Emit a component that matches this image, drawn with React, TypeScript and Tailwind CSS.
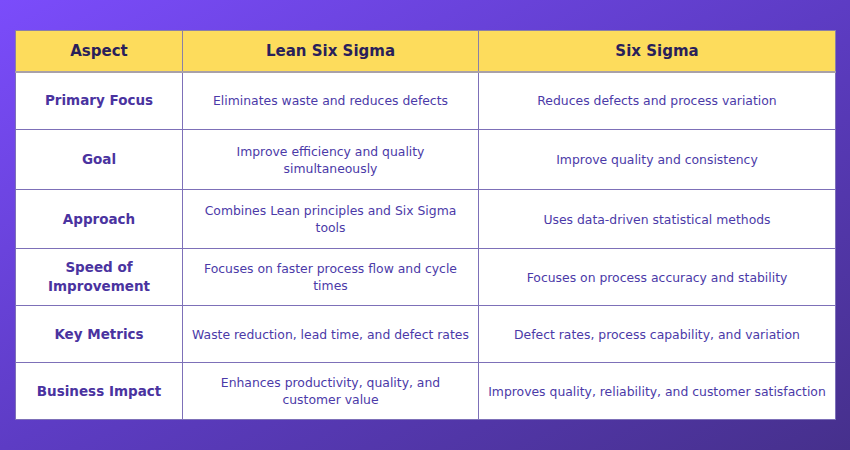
import React from "react";

type Cell = string | string[];

const rows: [string, Cell, Cell][] = [
  ["Primary Focus", "Eliminates waste and reduces defects", "Reduces defects and process variation"],
  ["Goal", ["Improve efficiency and quality", "simultaneously"], "Improve quality and consistency"],
  ["Approach", ["Combines Lean principles and Six Sigma", "tools"], "Uses data-driven statistical methods"],
  ["Speed of Improvement", ["Focuses on faster process flow and cycle", "times"], "Focuses on process accuracy and stability"],
  ["Key Metrics", "Waste reduction, lead time, and defect rates", "Defect rates, process capability, and variation"],
  ["Business Impact", ["Enhances productivity, quality, and", "customer value"], "Improves quality, reliability, and customer satisfaction"],
];

const heights = ["h-[58px]", "h-[60px]", "h-[59px]", "h-[57px]", "h-[57px]", "h-[57px]"];

function Text({ c }: { c: Cell }) {
  if (typeof c === "string") return <>{c}</>;
  return (
    <>
      {c.map((l, i) => (
        <span key={i} className="block">
          {l}
        </span>
      ))}
    </>
  );
}

export default function App() {
  return (
    <div
      className="w-[850px] h-[450px] bg-gradient-to-br from-[#7b4cfb] via-[#5d3cc4] to-[#46308c] pt-[30px] pl-[15px]"
      style={{ fontFamily: '"DejaVu Sans", sans-serif' }}
    >
      <table className="border-collapse w-[820px] table-fixed bg-white">
        <colgroup>
          <col className="w-[167px]" />
          <col className="w-[296px]" />
          <col className="w-[357px]" />
        </colgroup>
        <thead>
          <tr className="h-[41px] bg-[#fddc5c]">
            {["Aspect", "Lean Six Sigma", "Six Sigma"].map((h) => (
              <th
                key={h}
                className="border border-[#8b7fa6] border-b-[2px] border-b-[#a9a1a8] text-[15px] font-bold text-[#2a1f5a] text-center p-0"
              >
                {h}
              </th>
            ))}
          </tr>
        </thead>
        <tbody>
          {rows.map((r, i) => (
            <tr key={r[0]} className={heights[i]}>
              <td className="border border-[#7d70b8] text-center px-3 text-[13.5px] leading-[19px] font-bold text-[#4a33a0]">
                {r[0]}
              </td>
              <td className="border border-[#7d70b8] text-center px-[4px] text-[12.4px] leading-[17px] text-[#4b3aa8]">
                <Text c={r[1]} />
              </td>
              <td className="border border-[#7d70b8] text-center px-[4px] text-[12.4px] leading-[17px] text-[#4b3aa8]">
                <Text c={r[2]} />
              </td>
            </tr>
          ))}
        </tbody>
      </table>
    </div>
  );
}
